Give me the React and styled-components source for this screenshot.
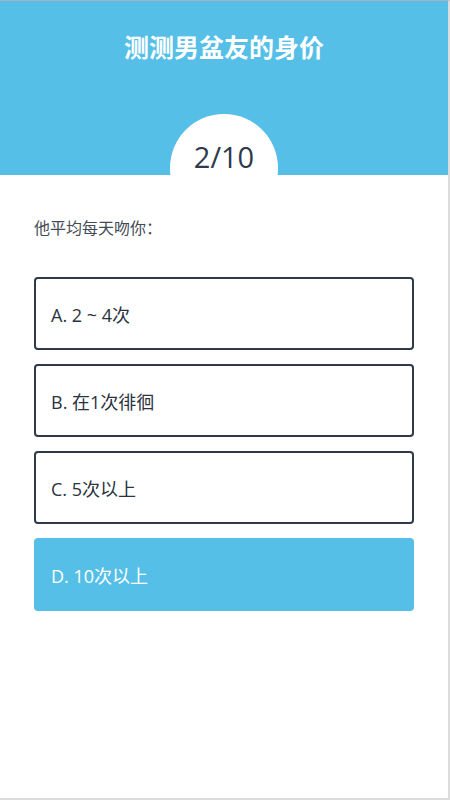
import React from 'react';
import styled, { createGlobalStyle } from 'styled-components';

const Global = createGlobalStyle`
  html, body { margin: 0; padding: 0; background: #fff; }
  body { font-family: "Open Sans", "Noto Sans CJK SC", sans-serif; }
`;

const Frame = styled.div`
  box-sizing: border-box;
  width: 450px;
  height: 800px;
  border-top: 1px solid #a3b3c2;
  border-right: 2px solid #dcdcdc;
  border-bottom: 2px solid #dcdcdc;
  overflow: hidden;
  display: flex;
  flex-direction: column;
`;

const Header = styled.header`
  flex-shrink: 0;
  height: 174px;
  background: #55bfe7;
  display: flex;
  flex-direction: column;
  align-items: center;
  overflow: hidden;
`;

const Title = styled.h1`
  margin: 27px 0 0;
  height: 36px;
  line-height: 36px;
  color: #fff;
  font-size: 25px;
  font-weight: 700;
  font-family: "Noto Sans CJK SC", sans-serif;
`;

const Counter = styled.div`
  flex-shrink: 0;
  margin-top: 50px;
  width: 108px;
  height: 108px;
  border-radius: 50%;
  background: #fff;
  display: flex;
  justify-content: center;
  padding-top: 28px;
  box-sizing: border-box;
  color: #2e3a4c;
  font-size: 29px;
  line-height: 1;
`;

const Body = styled.main`
  padding: 40px 34px 0;
`;

const Question = styled.p`
  margin: 0 0 38px;
  font-size: 16px;
  color: #444b55;
  font-family: "Noto Sans CJK SC", sans-serif;
`;

const Options = styled.div`
  display: flex;
  flex-direction: column;
  gap: 14px;
`;

const Option = styled.div`
  box-sizing: border-box;
  height: 73px;
  border-radius: 4px;
  border: 2px solid ${p => (p.$active ? '#55bfe7' : '#2c3a4a')};
  background: ${p => (p.$active ? '#55bfe7' : '#fff')};
  color: ${p => (p.$active ? '#fff' : '#2a3340')};
  display: flex;
  align-items: center;
  padding: 0 15px;
  font-size: 18px;
`;

const options = ['A. 2 ~ 4次', 'B. 在1次徘徊', 'C. 5次以上', 'D. 10次以上'];

export default function App() {
  return (
    <>
      <Global />
      <Frame>
        <Header>
          <Title>测测男盆友的身价</Title>
          <Counter>2/10</Counter>
        </Header>
        <Body>
          <Question>他平均每天吻你：</Question>
          <Options>
            {options.map((o, i) => (
              <Option key={o} $active={i === 3}>{o}</Option>
            ))}
          </Options>
        </Body>
      </Frame>
    </>
  );
}
